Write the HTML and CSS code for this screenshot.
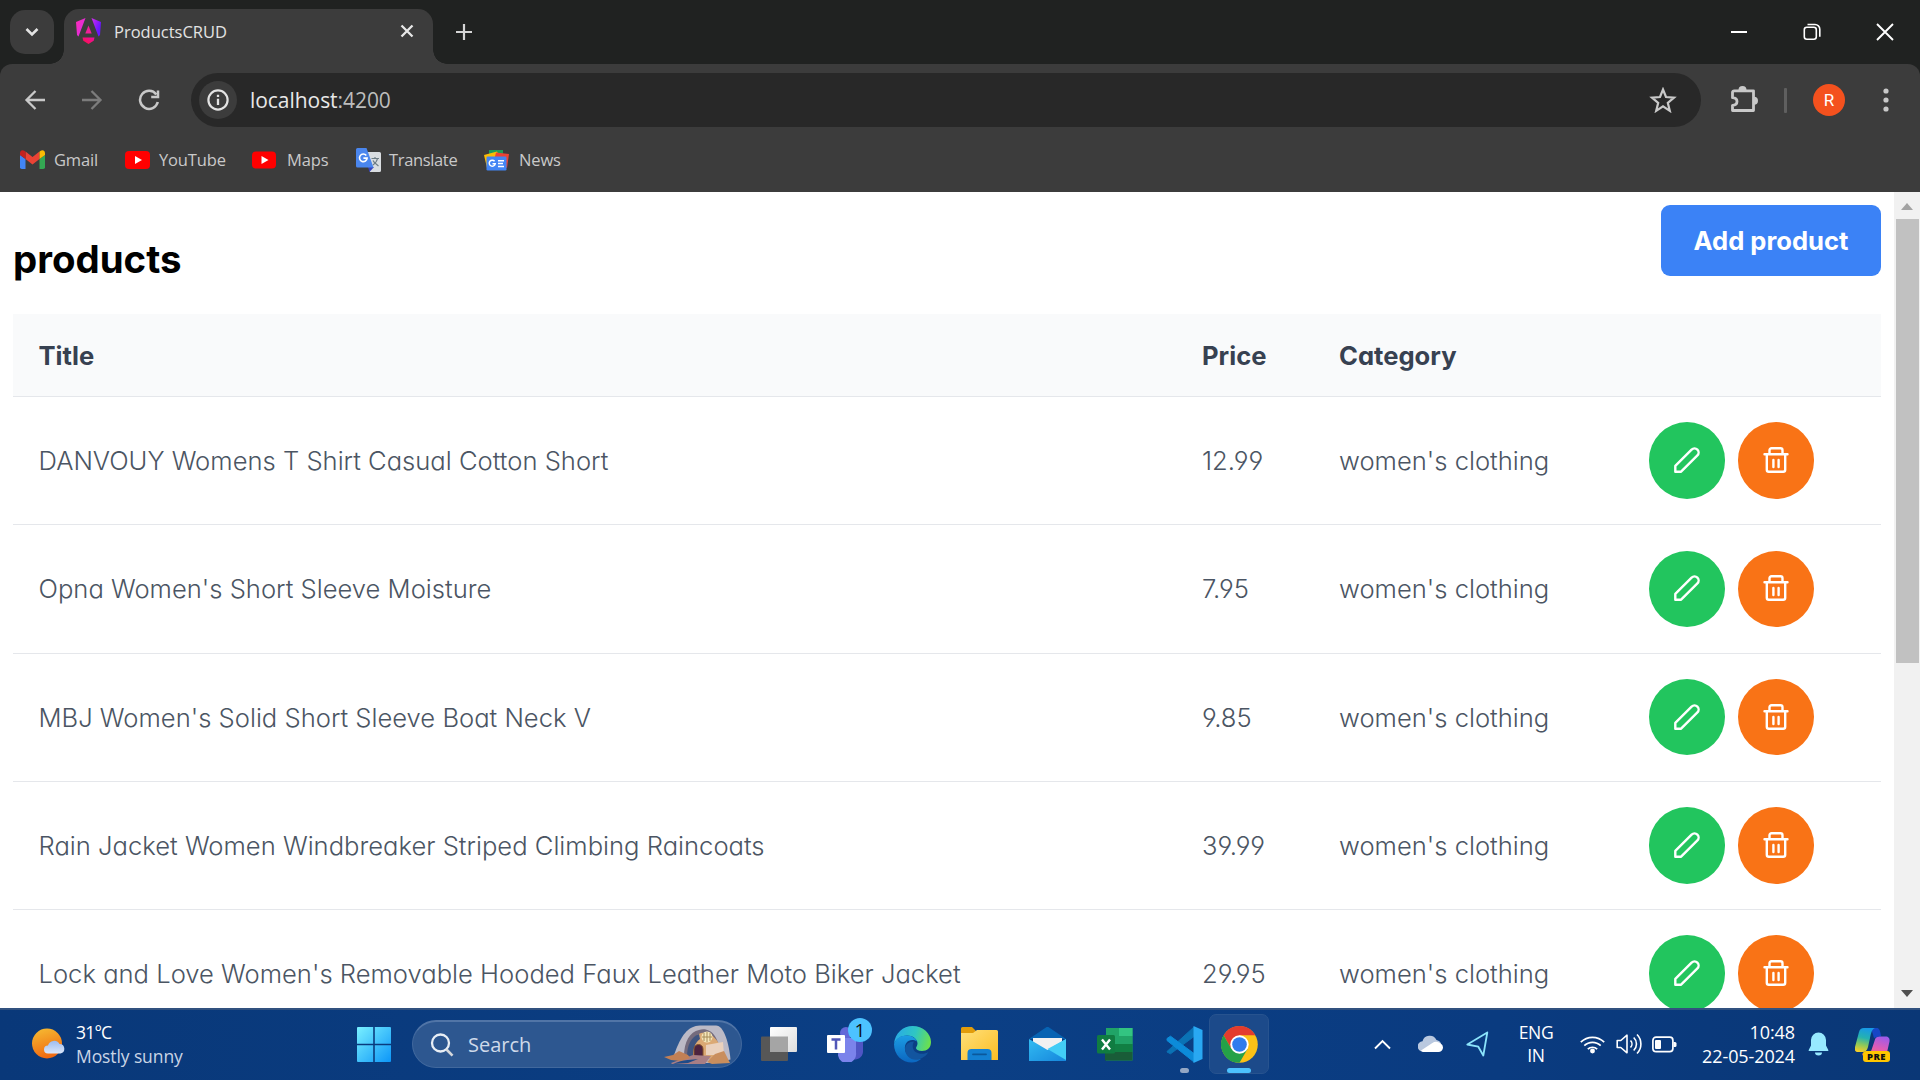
FILE: index.html
```html
<!DOCTYPE html>
<html lang="en">
<head>
<meta charset="utf-8">
<title>ProductsCRUD</title>
<link rel="stylesheet" href="styles.css">
</head>
<body>
<header class="tabstrip">
  <div class="tab-search"><svg width="14" height="10" viewBox="0 0 14 10"><path d="M1.500 2l5.500 5.500L12.500 2" fill="none" stroke="#e3e3e3" stroke-width="2.600"/></svg></div>
  <div class="tab">
    <svg class="tab-icon" width="25" height="26" viewBox="0 0 25 26">
      <defs><linearGradient id="ngA" x1="0" y1="0" x2="1" y2="0.300"><stop offset="0" stop-color="#ff2bb5"/><stop offset=".55" stop-color="#d92ee8"/><stop offset="1" stop-color="#6a16ff"/></linearGradient><linearGradient id="ngB" x1="0" y1="1" x2="1" y2="0"><stop offset="0" stop-color="#ff1040"/><stop offset="1" stop-color="#e810a8"/></linearGradient></defs>
      <path d="M0 4L9.500 0 2.500 18.500 1 17zM15.500 0L25 4 24 17l-1.500 1.500z" fill="url(#ngA)"/>
      <path d="M12.500 7.500l3.200 8H9.300z" fill="#f0209a"/><path d="M6.500 19.500h12l-.8 3.300-5.200 3.200-5.200-3.200z" fill="url(#ngB)"/>
    </svg>
    <span class="tab-title">ProductsCRUD</span>
    <svg class="tab-close" width="14" height="14" viewBox="0 0 14 14"><path d="M1.500 1.500l11 11M12.500 1.500l-11 11" stroke="#e8e8e8" stroke-width="2.300"/></svg>
  </div>
  <svg class="new-tab" width="18" height="18" viewBox="0 0 18 18"><path d="M9 1v16M1 9h16" stroke="#d5d5d5" stroke-width="2.200"/></svg>
  <div class="window-controls">
    <svg width="18" height="18" viewBox="0 0 18 18"><path d="M1 9h16" stroke="#fff" stroke-width="2"/></svg>
    <svg width="18" height="18" viewBox="0 0 18 18" fill="none" stroke="#fff" stroke-width="1.600"><rect x="1.300" y="4.300" width="12" height="12" rx="2.500"/><path d="M4.500 1.500h7.500a4.800 4.800 0 0 1 4.800 4.800v7.500"/></svg>
    <svg width="18" height="18" viewBox="0 0 18 18"><path d="M1 1l16 16M17 1L1 17" stroke="#fff" stroke-width="1.900"/></svg>
  </div>
</header>
<div class="browser-bars">
  <nav class="toolbar">
    <div class="nav-buttons">
      <svg width="22" height="22" viewBox="0 0 22 22" fill="none" stroke="#c9c9c9" stroke-width="2.300"><path d="M21 11H3M11.500 2l-9 9 9 9"/></svg>
      <svg width="22" height="22" viewBox="0 0 22 22" fill="none" stroke="#7c7c7c" stroke-width="2.300"><path d="M1 11h18M10.500 2l9 9-9 9"/></svg>
      <svg width="22" height="22" viewBox="0 0 22 22" fill="none" stroke="#c9c9c9" stroke-width="2.500"><path d="M18.300 5.500A9 9 0 1 0 19.800 13M20 1.500V8h-6.800"/></svg>
    </div>
    <div class="omnibox">
      <span class="site-info"><svg width="22" height="22" viewBox="0 0 22 22"><circle cx="11" cy="11" r="9.600" fill="none" stroke="#e3e3e3" stroke-width="2.200"/><path d="M11 9.800v6.200M11 5.800v2.300" stroke="#e3e3e3" stroke-width="2.300"/></svg></span>
      <span class="url">localhost<span class="port">:4200</span></span>
      <svg class="star" width="28" height="26" viewBox="0 0 28 26"><path d="M14 2.500l3 7.500 8 .6-6.200 5.200 2 8L14 19.300l-6.800 4.500 2-8L3 10.600l8-.6z" fill="none" stroke="#c9c9c9" stroke-width="2.200"/></svg>
    </div>
    <svg class="puzzle" width="28" height="28" viewBox="0 0 28 28"><path d="M4.500 4.800h19V24.500H2.500v-5.200c6-.3 6-7.300 0-7.600V6.500a1.700 1.700 0 0 1 1.700-1.700z" fill="none" stroke="#c9c9c9" stroke-width="2.800" stroke-linejoin="round"/><path d="M8.500 4a4 4 0 0 1 8 0zM24 10.800a4 4 0 0 1 0 8z" fill="#c9c9c9"/></svg>
    <span class="divider"></span>
    <span class="avatar">R</span>
    <svg class="dots" width="6" height="24" viewBox="0 0 6 24" fill="#c9c9c9"><circle cx="3" cy="3" r="2.600"/><circle cx="3" cy="12" r="2.600"/><circle cx="3" cy="21" r="2.600"/></svg>
  </nav>
  <nav class="bookmarks">
    <span class="bookmark gmail"><svg width="25" height="20" viewBox="0 0 25 20"><path d="M0 5l5.500 4v10H1.800A1.800 1.800 0 0 1 0 17.200z" fill="#4285f4"/><path d="M25 5l-5.500 4v10h3.700a1.800 1.800 0 0 0 1.800-1.800z" fill="#34a853"/><path d="M5.500 1.500l7 5.500 7-5.500V9l-7 5.500-7-5.500z" fill="#ea4335"/><path d="M0 5V3a2.700 2.700 0 0 1 4.300-2.200L5.500 1.700V9z" fill="#c5221f"/><path d="M25 5V3a2.700 2.700 0 0 0-4.300-2.200l-1.200.9V9z" fill="#fbbc04"/></svg><span>Gmail</span></span>
    <span class="bookmark youtube"><svg width="25" height="18" viewBox="0 0 25 18"><rect width="25" height="18" rx="4" fill="#f00"/><path d="M10 5l7 4-7 4z" fill="#fff"/></svg><span>YouTube</span></span>
    <span class="bookmark maps"><svg width="25" height="18" viewBox="0 0 25 18"><rect width="24" height="17" y=".5" rx="4" fill="#f00"/><path d="M9.500 5l7 4-7 4z" fill="#fff"/></svg><span>Maps</span></span>
    <span class="bookmark translate"><svg width="25" height="26" viewBox="0 0 25 26"><path d="M10 5h13.500A1.500 1.500 0 0 1 25 6.500v17a1.500 1.500 0 0 1-1.500 1.500H14z" fill="#d9dde1"/><path d="M12 20h6l-4.500 5z" fill="#3744bd"/><path d="M1.500 1h9l7 19.500H1.500A1.500 1.500 0 0 1 0 19V2.500A1.500 1.500 0 0 1 1.500 1z" fill="#4a86ee"/><path d="M10.300 8.500a3.800 3.800 0 1 0 .8 2.600H7.400" fill="none" stroke="#fff" stroke-width="1.600"/><path d="M15.500 11.500H23M19 10v1.500M21.500 11.500c-.5 3-2.500 5-4.500 6.500M17 13.500c1 2.500 3.500 4 5.500 5.500" fill="none" stroke="#6d7d86" stroke-width="1.200"/></svg><span>Translate</span></span>
    <span class="bookmark news"><svg width="25" height="21" viewBox="0 0 25 21"><path d="M5 0h14v6H5z" fill="#1e9b57"/><path d="M0 5l13-3.500 4 8L3 18z" fill="#fbbc04"/><path d="M25 4L12 2.500l-2 8L23 18z" fill="#ea4335"/><rect x="2.500" y="6.500" width="20" height="14" rx="1.200" fill="#4285f4"/><path d="M10.600 11.300a3 3 0 1 0 .6 2.500H8.500M14 10.800h6M14 13.600h5M14 16.400h6" fill="none" stroke="#fff" stroke-width="1.500"/></svg><span>News</span></span>
  </nav>
</div>
<div class="viewport">
  <main class="page">
    <div class="page-head"><h2>products</h2><button class="add">Add product</button></div>
    <div class="table">
      <div class="row head"><span>Title</span><span>Price</span><span>Category</span></div>
      <div class="row"><span>DANVOUY Womens T Shirt Casual Cotton Short</span><span>12.99</span><span>women's clothing</span><div class="actions"><button class="act edit"><svg><use href="#pencil"/></svg></button><button class="act del"><svg><use href="#trash"/></svg></button></div></div>
      <div class="row"><span>Opna Women's Short Sleeve Moisture</span><span>7.95</span><span>women's clothing</span><div class="actions"><button class="act edit"><svg><use href="#pencil"/></svg></button><button class="act del"><svg><use href="#trash"/></svg></button></div></div>
      <div class="row"><span>MBJ Women's Solid Short Sleeve Boat Neck V</span><span>9.85</span><span>women's clothing</span><div class="actions"><button class="act edit"><svg><use href="#pencil"/></svg></button><button class="act del"><svg><use href="#trash"/></svg></button></div></div>
      <div class="row"><span>Rain Jacket Women Windbreaker Striped Climbing Raincoats</span><span>39.99</span><span>women's clothing</span><div class="actions"><button class="act edit"><svg><use href="#pencil"/></svg></button><button class="act del"><svg><use href="#trash"/></svg></button></div></div>
      <div class="row"><span>Lock and Love Women's Removable Hooded Faux Leather Moto Biker Jacket</span><span>29.95</span><span>women's clothing</span><div class="actions"><button class="act edit"><svg><use href="#pencil"/></svg></button><button class="act del"><svg><use href="#trash"/></svg></button></div></div>
    </div>
  </main>
  <div class="scrollbar"><i class="arrow up"></i><i class="thumb"></i><i class="arrow down"></i></div>
</div>
<svg class="symbols" width="0" height="0">
  <symbol id="pencil" viewBox="0 0 26 26"><path d="M1.300 24.700v-5.800L17.600 2.600a4 4 0 0 1 5.800 5.800L7.100 24.700z" fill="none" stroke="#fff" stroke-width="2.400" stroke-linejoin="round"/></symbol>
  <symbol id="trash" viewBox="0 0 26 26"><path d="M1.500 7.300h23M3.800 7.300v15.400a2 2 0 0 0 2 2h14.400a2 2 0 0 0 2-2V7.300M6.500 7V3.300a2 2 0 0 1 2-2h9a2 2 0 0 1 2 2V7M10.400 13v7M15.600 13v7" fill="none" stroke="#fff" stroke-width="2.400" stroke-linecap="round"/></symbol>
</svg>
<footer class="taskbar">
  <div class="weather">
    <svg width="34" height="32" viewBox="0 0 34 32"><defs><linearGradient id="sun" x1=".3" y1="0" x2=".6" y2="1"><stop offset="0" stop-color="#f5b731"/><stop offset="1" stop-color="#f0650f"/></linearGradient><linearGradient id="cl" x1="0" y1="0" x2="0" y2="1"><stop offset="0" stop-color="#9dbcf0"/><stop offset="1" stop-color="#dbe7fa"/></linearGradient></defs><circle cx="15" cy="15.500" r="15" fill="url(#sun)"/><path d="M16 25.500a4 4 0 0 1 0-8 6.300 6.300 0 0 1 11.500-1.500 4.800 4.800 0 0 1 1 9.500z" fill="url(#cl)"/></svg>
    <div class="weather-text"><span class="temp">31°C</span><span class="cond">Mostly sunny</span></div>
  </div>
  <div class="apps">
    <svg class="start" width="34" height="35" viewBox="0 0 34 35"><defs><linearGradient id="win" x1="0" y1="0" x2="1" y2="1"><stop offset="0" stop-color="#79f0ff"/><stop offset="1" stop-color="#0c96f8"/></linearGradient></defs><path d="M1 0h15.200v16.700H0V1a1 1 0 0 1 1-1zM17.800 0H33a1 1 0 0 1 1 1v15.700H17.800zM0 18.300h16.200V35H1a1 1 0 0 1-1-1zM17.800 18.300H34V34a1 1 0 0 1-1 1H17.800z" fill="url(#win)"/></svg>
    <div class="search">
      <svg width="24" height="24" viewBox="0 0 24 24"><circle cx="10.500" cy="10" r="8.500" fill="none" stroke="#e8eef5" stroke-width="2.300"/><path d="M16.500 16.500l6 6.200" stroke="#d5d8dc" stroke-width="2.600"/></svg>
      <span>Search</span>
      <svg class="art" width="68" height="40" viewBox="0 0 68 40"><path d="M10 30C17 10 24 1 36 .5h16c8 0 13 18 14.500 34L50 38H22z" fill="#bcbac6"/><path d="M20 32c0-16 6-25 15-27 10-3 21 4 22 30z" fill="#746b7d"/><path d="M25 34c0-16 4-23 12-26 9-2 20 6 22 26z" fill="#dba974"/><path d="M23 32c0-12 4-20 12-23l1 5c-6 4-7 12-7 18z" fill="#3f547f"/><path d="M42 20l17-3 1 13H42z" fill="#ead1bd"/><path d="M30 31V24c0-6 9-6 9 0v8z" fill="#4d233f" stroke="#82502a"/><circle cx="43" cy="12" r="5.500" fill="#f5e7bb"/><path d="M38 12h10M40 8v8M43 7v10M46 8v8" stroke="#a68b58"/><path d="M7 38l22-8 18 1-6 8H8z" fill="#a77e85"/><path d="M0 32l9-2 6-4 9 4 2 3-9 3-10-1z" fill="#c28055"/><path d="M43 37l8-8 9-3 6 12-18 1z" fill="#c98e5d"/><path d="M9 39c10-5 20-4 25-5l-10 4z" fill="#1f4b88"/></svg>
    </div>
    <svg class="taskview" width="37" height="35" viewBox="0 0 37 35"><defs><linearGradient id="tv" x1="0" y1="0" x2="1" y2="1"><stop offset="0" stop-color="#fff"/><stop offset="1" stop-color="#dedede"/></linearGradient></defs><rect y="9.500" width="27" height="24.500" rx="1" fill="#575757"/><rect x="9" width="27" height="25" rx="1" fill="url(#tv)"/><path d="M9 9.500h18V25H9z" fill="#a5a5a5"/></svg>
    <div class="teams"><svg width="38" height="36" viewBox="0 0 38 36"><circle cx="19" cy="7" r="6" fill="#6368d8"/><path d="M25 13h11v13a8 8 0 0 1-11 7z" fill="#4f55c4"/><path d="M12 12h17v14.500a9 9 0 0 1-18 3z" fill="#7b83eb"/><rect y="9" width="18" height="18" rx="1" fill="#fff"/><path d="M4.500 13.500h9M9 13.500v10" stroke="#5157b8" stroke-width="2.500"/></svg><span class="badge">1</span></div>
    <svg class="edge" width="37" height="37" viewBox="0 0 37 37"><defs><linearGradient id="eg1" x1="0" y1=".3" x2="1" y2=".5"><stop offset="0" stop-color="#28a9e8"/><stop offset=".55" stop-color="#2fc6c3"/><stop offset="1" stop-color="#6be04e"/></linearGradient><linearGradient id="eg2" x1="0" y1="0" x2="0" y2="1"><stop offset="0" stop-color="#1c9de4"/><stop offset="1" stop-color="#0b66c0"/></linearGradient></defs><path d="M0 18C1 7 9 0 18.500 0 29 0 37 7.500 37 16c0 6-4 9-9 9-4 0-6-1.500-6-3 0-1 1.500-2 1.500-4.500C23.500 13 18.500 9.500 13 9.500 7 9.500 2 13 0 18z" fill="url(#eg1)"/><path d="M0 18c2-6 7-8.500 13-8.500 5 0 9 3 10 6-7-4-13 1-12 8 1 7 8 10 16 9.500-3 2.500-6 3.500-9 3.500C8 36.500 0 29 0 18z" fill="url(#eg2)"/><path d="M11 23c0 8 9 14 17 9 3-1.500 5-3.500 6.500-6-3 1.800-8 2.700-12 .5C18 24 18 19 20 15.500c-5 0-9 3-9 7.500z" fill="#12559f"/></svg>
    <svg class="folder" width="37" height="34" viewBox="0 0 37 34"><defs><linearGradient id="fo" x1="0" y1="0" x2="1" y2="1"><stop offset="0" stop-color="#ffe07a"/><stop offset="1" stop-color="#fbbd23"/></linearGradient></defs><path d="M0 1.500A1.500 1.500 0 0 1 1.500 0H11l4 4v5H0z" fill="#e29c0a"/><path d="M0 6h12l4-3h19.500A1.500 1.500 0 0 1 37 4.500V33H0z" fill="url(#fo)"/><path d="M6.500 33v-7a4 4 0 0 1 4-4h16a4 4 0 0 1 4 4v7z" fill="#1380d2"/><path d="M12 27.300h13" stroke="#0b589b" stroke-width="1.800" stroke-linecap="round"/></svg>
    <svg class="mail" width="37" height="34" viewBox="0 0 37 34"><defs><linearGradient id="ml" x1="0" y1="0" x2="1" y2="1"><stop offset="0" stop-color="#32bcf2"/><stop offset="1" stop-color="#1686dc"/></linearGradient></defs><path d="M0 12L16.500.8a3 3 0 0 1 4 0L37 12z" fill="#0763b3"/><path d="M4 11h29v8L18.500 27 4 17z" fill="#f1f1f1"/><path d="M37 12v22H0V12l18.500 11z" fill="url(#ml)"/><path d="M37 12v21L18.500 22z" fill="#42cdf6"/></svg>
    <svg class="excel" width="36" height="33" viewBox="0 0 36 33"><path d="M9 0h26.500v32.500H9z" fill="#20a467"/><path d="M22 0h13.500v8H22z" fill="#33c481"/><path d="M22 8h13.500v8H22z" fill="#21a366"/><path d="M8 16h27.500v8H8z" fill="#117f43"/><path d="M8 24h27.500v8.500H8z" fill="#195c38"/><rect y="7" width="18" height="18.500" rx="1.500" fill="#107c41"/><path d="M5 11.500l8 10M13 11.500l-8 10" stroke="#fff" stroke-width="2.400"/></svg>
    <div class="running code"><svg width="37" height="37" viewBox="0 0 37 37"><path d="M1 25.500L28 1v9.500L4.500 27.800 1 26z" fill="#0a72b5" stroke="#0a72b5" stroke-linejoin="round"/><path d="M1 12.500l3.500-2.300L28 27.500V36L1 14.500z" fill="#0c8bd9" stroke="#0c8bd9" stroke-linejoin="round"/><path d="M27.500 0l9 4v29l-9 4z" fill="#29a8f2"/></svg><i></i></div>
    <div class="running chrome"><svg width="37" height="37" viewBox="0 0 37 37"><circle cx="18.500" cy="18.500" r="18.300" fill="#fbc116"/><path d="M2.600 9.300A18.300 18.300 0 0 1 34.400 9.300H18.500L10.500 23z" fill="#e33b2e"/><path d="M2.600 9.300A18.300 18.300 0 0 0 18.500 36.800l8-13.700-16 0z" fill="#24a148"/><circle cx="18.500" cy="18.500" r="9.200" fill="#fff"/><circle cx="18.500" cy="18.500" r="7.300" fill="#2f7ced"/></svg><i></i></div>
  </div>
  <div class="tray">
    <svg class="chev" width="17" height="11" viewBox="0 0 17 11"><path d="M1 9.500l7.500-7.500L16 9.500" fill="none" stroke="#fff" stroke-width="1.900"/></svg>
    <svg class="cloud" width="25" height="18" viewBox="0 0 25 18"><path d="M5 16.500A5 5 0 0 1 4.500 6.300 7.500 7.500 0 0 1 18.500 5a6 6 0 0 1 1 11.500z" fill="#b9c8df"/><path d="M3 15.500l11-7.300a7 7 0 0 1 8.500.3 4.500 4.500 0 0 1-2 8.500H5a3.500 3.500 0 0 1-2-1.500z" fill="#fff"/></svg>
    <svg class="loc" width="23" height="26" viewBox="0 0 23 26"><path d="M21.300 1.500L1.300 13.500l11 2.200 5 8.800z" fill="none" stroke="#8be4fb" stroke-width="1.800" stroke-linejoin="round"/></svg>
    <div class="lang"><span>ENG</span><span>IN</span></div>
    <svg class="wifi" width="25" height="19" viewBox="0 0 25 19" fill="none" stroke="#fff" stroke-width="1.700"><path d="M.8 7.200a16.500 16.500 0 0 1 23.400 0M4.300 10.700a11.600 11.600 0 0 1 16.400 0M7.800 14.200a6.700 6.700 0 0 1 9.400 0"/><circle cx="12.500" cy="16" r="1.600" fill="#fff"/></svg>
    <svg class="sound" width="26" height="22" viewBox="0 0 26 22" fill="none" stroke="#fff" stroke-width="1.600"><path d="M1.200 7.500h3.600L11 2.200v17.600l-6.200-5.300H1.200z" stroke-linejoin="round"/><path d="M14.500 7.500a5 5 0 0 1 0 7M17.700 4.500a9 9 0 0 1 0 13M21 1.500a13.500 13.500 0 0 1 0 19"/></svg>
    <svg class="battery" width="25" height="17" viewBox="0 0 25 17"><rect x=".9" y="1.200" width="20" height="14.500" rx="3.200" fill="none" stroke="#fff" stroke-width="1.700"/><rect x="3" y="4" width="6" height="9" rx="1" fill="#fff"/><path d="M21.500 6h1.500a1.500 1.500 0 0 1 1.500 1.500v2A1.500 1.500 0 0 1 23 11h-1.500z" fill="#fff"/></svg>
    <div class="clock"><span>10:48</span><span>22-05-2024</span></div>
    <svg class="bell" width="21" height="24" viewBox="0 0 21 24"><path d="M10.500.5a7.500 7.500 0 0 1 7.500 7.500v5.500l2.300 4.500v1H.7v-1L3 13.500V8A7.500 7.500 0 0 1 10.500.5z" fill="#97e9ff"/><path d="M7 20.500h7a3.500 3 0 0 1-7 0z" fill="#97e9ff"/></svg>
    <div class="copilot"><svg width="36" height="32" viewBox="0 0 36 32"><defs><linearGradient id="cp1" x1=".5" y1="0" x2=".3" y2="1"><stop offset="0" stop-color="#1799e6"/><stop offset=".4" stop-color="#25b2b0"/><stop offset=".7" stop-color="#8dc95a"/><stop offset="1" stop-color="#f6cd28"/></linearGradient><linearGradient id="cp2" x1=".7" y1="0" x2=".3" y2="1"><stop offset="0" stop-color="#a05be8"/><stop offset=".5" stop-color="#e25cb4"/><stop offset="1" stop-color="#ff7a55"/></linearGradient></defs><path d="M16 0h6c2 0 3 2 4 8l-7 2z" fill="#1646c6"/><path d="M9 0h11c-3 1-4 5-5 10l-2 9c-1 4-3 5-6 5H3c-3 0-3.500-2-3-5L4 4c1-3 2-4 5-4z" fill="url(#cp1)"/><path d="M26 8.500h4.500c3 0 4.500 2 4 5l-3 13c-1 3-3 4-6 4H12c-3 0-4-2-5-5h3c4 0 6-1 7-5l3-9c.6-2 2-3 6-3z" fill="url(#cp2)"/></svg><span class="pre">PRE</span></div>
  </div>
</footer>
</body>
</html>
```
FILE: styles.css
```css
* { box-sizing: border-box; }
body { margin: 0; width: 1920px; height: 1080px; overflow: hidden; display: flex; flex-direction: column; background: #202221; font-family: "Open Sans", "Noto Sans", sans-serif; }
svg { display: block; flex: none; }
button { border: 0; padding: 0; }
.symbols { position: absolute; }

.tabstrip { height: 64px; flex: none; display: flex; align-items: center; padding-left: 10px; background: #202221; }
.tab-search { width: 44px; height: 44px; border-radius: 15px; background: #3c3c3c; display: flex; align-items: center; justify-content: center; }
.tab { position: relative; align-self: flex-end; width: 369px; height: 55px; margin-left: 10px; padding: 0 19px 11px 12px; border-radius: 15px 15px 0 0; background: #3c3c3c; display: flex; align-items: center; }
.tab::before, .tab::after { content: ""; position: absolute; bottom: 0; width: 14px; height: 14px; }
.tab::before { left: -14px; background: radial-gradient(circle at 0 0, #202221 13.500px, #3c3c3c 14px); }
.tab::after { right: -14px; background: radial-gradient(circle at 100% 0, #202221 13.500px, #3c3c3c 14px); }
.tab-title { margin-left: 13px; font-size: 16.500px; letter-spacing: 0; color: #e3e3e3; flex: 1; }
.new-tab { margin-left: 22px; }
.window-controls { margin-left: auto; margin-right: 26px; display: flex; gap: 55px; }

.browser-bars { height: 128px; flex: none; background: #3c3c3c; border-radius: 12px 12px 0 0; }
.toolbar { height: 72px; padding: 9px 31px 9px 24px; display: flex; align-items: center; }
.nav-buttons { width: 167px; display: flex; gap: 35px; }
.omnibox { width: 1510px; height: 54px; border-radius: 27px; background: #282828; display: flex; align-items: center; padding: 0 24px 0 8px; }
.site-info { width: 38px; height: 38px; border-radius: 50%; background: #3c3c3c; display: flex; align-items: center; justify-content: center; }
.url { flex: 1; margin-left: 13px; font-size: 21px; letter-spacing: -0.050px; color: #e8e8e8; }
.port { color: #bdbdbd; }
.puzzle { margin-left: 29px; }
.divider { width: 3px; height: 25px; margin-left: 26px; background: #5f5f5f; border-radius: 1px; }
.avatar { width: 32px; height: 32px; margin-left: 26px; border-radius: 50%; background: #f4511e; color: #fff; font: 17px/32px Roboto, sans-serif; text-align: center; }
.dots { margin-left: 38px; }
.bookmarks { height: 48px; padding-left: 20px; display: flex; align-items: center; color: #c9c9c9; font-size: 16.500px; letter-spacing: -0.150px; }
.bookmark { display: flex; align-items: center; gap: 10px; white-space: nowrap; }
.bookmark span { padding-bottom: 2px; }
.gmail { width: 105px; gap: 9px; }
.youtube { width: 127px; gap: 9px; }
.maps { width: 104px; }
.translate { width: 128px; gap: 8px; letter-spacing: -0.350px; }

.viewport { flex: 1; min-height: 0; display: flex; background: #fff; overflow: hidden; }
.page { width: 1894px; padding: 13px 13px 0; overflow: hidden; font-family: Inter, sans-serif; font-feature-settings: "cv02", "cv03", "cv04", "cv11"; }
.page-head { height: 109px; display: flex; justify-content: space-between; align-items: flex-start; }
h2 { margin: 30px 0 0; font-size: 38.400px; line-height: 48px; font-weight: 700; color: #000; }
.add { width: 220px; height: 71px; border-radius: 9px; background: #3b82f6; color: #fff; font: 700 25.600px Inter, sans-serif; }
.row { height: 128.250px; flex: none; display: grid; grid-template-columns: 1163.500px 137px 309.500px auto; align-items: center; padding-left: 25.500px; border-bottom: 1px solid #e5e7eb; color: #4b5563; font-size: 25.600px; font-weight: 340; }
.row span { white-space: nowrap; }
.row.head { height: 83px; background: #f9fafb; color: #374151; font-weight: 700; padding-top: 1px; }
.actions { display: flex; gap: 12.800px; }
.act { width: 76.500px; height: 76.500px; border-radius: 50%; display: flex; align-items: center; justify-content: center; }
.act svg { width: 26px; height: 26px; margin-bottom: 1px; }
.edit { background: #22c55e; }
.del { background: #f97316; }
.scrollbar { width: 26px; background: #f1f1f1; display: flex; flex-direction: column; align-items: center; padding: 11px 0 11px; }
.arrow { border: 6.500px solid transparent; }
.up { border-top: 0; border-bottom: 7px solid #a3a3a3; }
.down { border-bottom: 0; border-top: 7px solid #505050; margin-top: auto; }
.thumb { width: 23px; height: 444px; margin: 9px 0 0 1px; background: #c1c1c1; }

.taskbar { height: 72px; flex: none; display: flex; align-items: center; justify-content: space-between; background: linear-gradient(90deg, #093879, #0b3f85 50%, #0a3b80 78%, #0a3776); border-top: 2px solid #31517f; padding-bottom: 2px; color: #fff; }
.weather { width: 357px; padding-left: 32px; display: flex; align-items: center; gap: 10px; }
.weather-text { display: flex; flex-direction: column; font-size: 17.500px; line-height: 24px; letter-spacing: -0.100px; padding-bottom: 1px; }
.temp { letter-spacing: -0.800px; }
.cond { color: #c9d5e6; }
.apps { display: flex; align-items: center; flex: 1; }
.search { width: 330px; height: 48px; margin-left: 21px; border-radius: 24px; background: #2d5790; border: 1px solid #41689d; border-top: 2px solid #5175a7; display: flex; align-items: center; padding: 0 9px 0 17px; font-size: 20px; letter-spacing: 0; color: #cfdaea; }
.search span { margin-left: 14px; flex: 1; }
.taskview { margin-left: 19px; }
.teams { position: relative; margin-left: 29px; }
.badge { position: absolute; left: 21px; top: -8px; width: 24px; height: 24px; border-radius: 50%; background: #4cc2ff; color: #111; font-size: 19px; line-height: 24px; text-align: center; }
.edge { margin-left: 29px; }
.folder { margin-left: 30px; }
.mail { margin-left: 31px; }
.excel { margin-left: 31px; }
.running { position: relative; height: 60px; display: flex; align-items: center; justify-content: center; }
.running i { position: absolute; bottom: 1px; height: 5px; border-radius: 3px; }
.code { width: 37px; margin-left: 33px; }
.code i { width: 9px; background: #94a7c4; }
.chrome { width: 60px; margin-left: 6px; border-radius: 7px; background: #1c4a8a; border: 1px solid #27538f; }
.chrome i { width: 24px; background: #4cc2ff; bottom: 0; }
.tray { width: 546px; flex: none; display: flex; align-items: center; font-size: 17.500px; line-height: 23px; letter-spacing: -0.400px; }
.cloud { margin-left: 27px; }
.loc { margin-left: 23px; }
.lang { width: 46px; margin-left: 24px; text-align: center; }
.lang span, .clock span { display: block; }
.wifi { margin-left: 21px; }
.sound { margin-left: 11px; }
.battery { margin-left: 10px; }
.clock { width: 112px; margin-left: 6px; padding-bottom: 1px; line-height: 24px; text-align: right; white-space: nowrap; font-size: 18px; letter-spacing: -0.100px; }
.bell { margin-left: 13px; }
.copilot { position: relative; margin-left: 26px; }
.pre { position: absolute; left: 8px; top: 23px; width: 27px; height: 11px; border-radius: 3px; background: #ffc600; color: #111; font-size: 9.500px; line-height: 11px; font-weight: 800; letter-spacing: 0.500px; text-align: center; }
```
